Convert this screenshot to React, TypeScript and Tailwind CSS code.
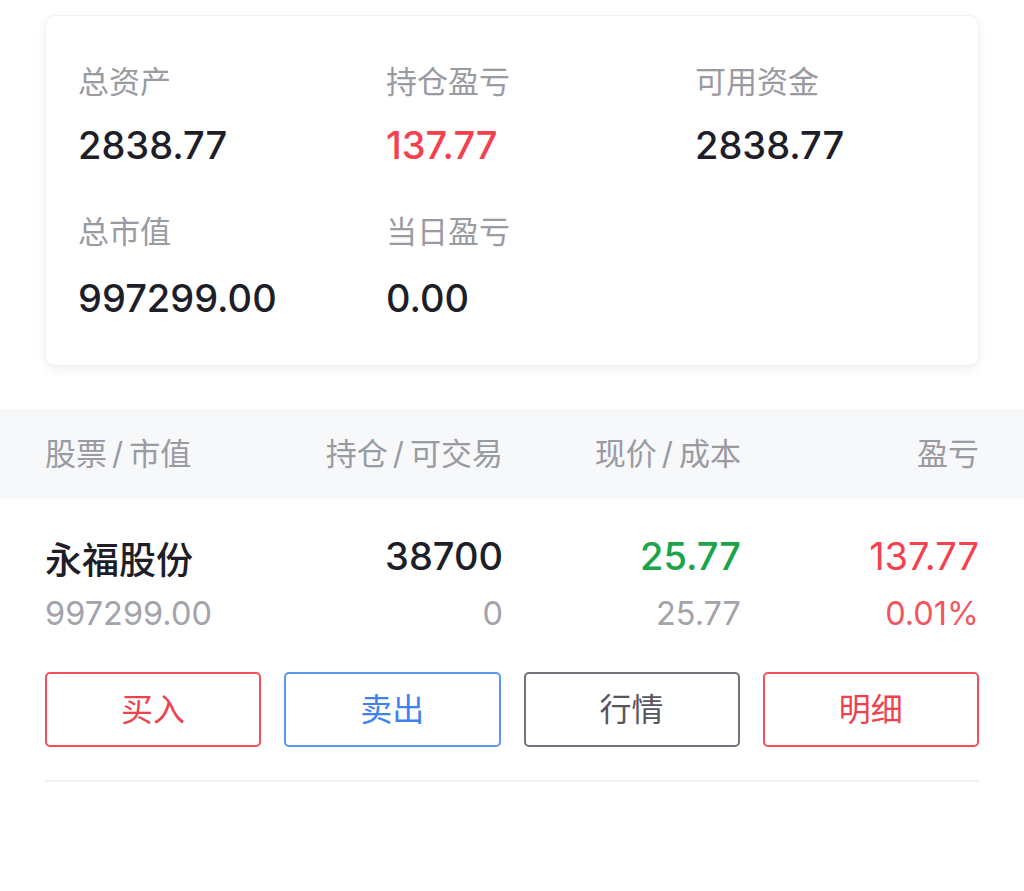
import React from "react"

const font = { fontFamily: 'Inter, "Noto Sans CJK SC", sans-serif' }

const summary = [
    [
        { label: "总资产", value: "2838.77", tone: "text-[#1e1e28]" },
        { label: "持仓盈亏", value: "137.77", tone: "text-[#f5404e]" },
        { label: "可用资金", value: "2838.77", tone: "text-[#1e1e28]" },
    ],
    [
        { label: "总市值", value: "997299.00", tone: "text-[#1e1e28]" },
        { label: "当日盈亏", value: "0.00", tone: "text-[#1e1e28]" },
    ],
]

const actions = [
    { label: "买入", cls: "border-[#f2515c] text-[#f0414e]" },
    { label: "卖出", cls: "border-[#5a96f2] text-[#3f82ef]" },
    { label: "行情", cls: "border-[#72737f] text-[#55565f]" },
    { label: "明细", cls: "border-[#f2515c] text-[#f0414e]" },
]

const Slash = () => <span className="ml-[5px] mr-[6px]">/</span>

export default function App() {
    return (
        <div className="min-h-screen w-full bg-white pt-[15px]" style={font}>
            {/* Summary card */}
            <div className="px-[45px]">
                <div className="rounded-[10px] bg-white border border-[#f0f0f3] shadow-[0_4px_12px_rgba(0,0,0,0.06)] px-[32px] pt-[46px] pb-[45px]">
                    {summary.map((row, i) => (
                        <div
                            key={i}
                            className={i > 0 ? "grid grid-cols-[308px_309px_1fr] mt-[45px]" : "grid grid-cols-[308px_309px_1fr]"}
                        >
                            {row.map((item) => (
                                <div key={item.label}>
                                    <div className="text-[31px] leading-[40px] text-[#9a9aa2]">{item.label}</div>
                                    <div
                                        className={`text-[38px] leading-[44px] font-medium ${i > 0 ? "mt-[24px]" : "mt-[21px]"} ${item.tone}`}
                                    >
                                        {item.value}
                                    </div>
                                </div>
                            ))}
                        </div>
                    ))}
                </div>
            </div>

            {/* Table header */}
            <div className="mt-[43px] h-[90px] bg-[#f7f8fa] px-[45px] grid grid-cols-[1fr_238px_238px_238px] items-center text-[31px] text-[#9a9aa2]">
                <div>股票<Slash />市值</div>
                <div className="text-right">持仓<Slash />可交易</div>
                <div className="text-right">现价<Slash />成本</div>
                <div className="text-right">盈亏</div>
            </div>

            {/* Position row */}
            <div className="px-[45px] pt-[40px]">
                <div className="grid grid-cols-[1fr_238px_238px_238px]">
                    <div>
                        <div className="text-[37px] leading-[44px] font-medium text-[#1e1e28]">永福股份</div>
                        <div className="text-[32.5px] leading-[40px] mt-[11px] text-[#a3a3ab]">997299.00</div>
                    </div>
                    <div className="text-right">
                        <div className="text-[38px] leading-[34px] font-medium text-[#1e1e28]">38700</div>
                        <div className="text-[32.5px] leading-[40px] mt-[21px] text-[#a3a3ab]">0</div>
                    </div>
                    <div className="text-right">
                        <div className="text-[38px] leading-[34px] font-medium text-[#1ba44b]">25.77</div>
                        <div className="text-[32.5px] leading-[40px] mt-[21px] text-[#a3a3ab]">25.77</div>
                    </div>
                    <div className="text-right">
                        <div className="text-[38px] leading-[34px] text-[#f5404e]">137.77</div>
                        <div className="text-[32.5px] leading-[40px] mt-[21px] text-[#f25560]">0.01%</div>
                    </div>
                </div>

                <div className="grid grid-cols-4 gap-[23px] mt-[38px]">
                    {actions.map((a) => (
                        <button
                            key={a.label}
                            className={`h-[75px] rounded-[5px] border-2 bg-white text-[32px] ${a.cls}`}
                        >
                            {a.label}
                        </button>
                    ))}
                </div>

                <div className="mt-[33px] h-[2px] bg-[#f1f1f3]" />
            </div>
        </div>
    )
}
